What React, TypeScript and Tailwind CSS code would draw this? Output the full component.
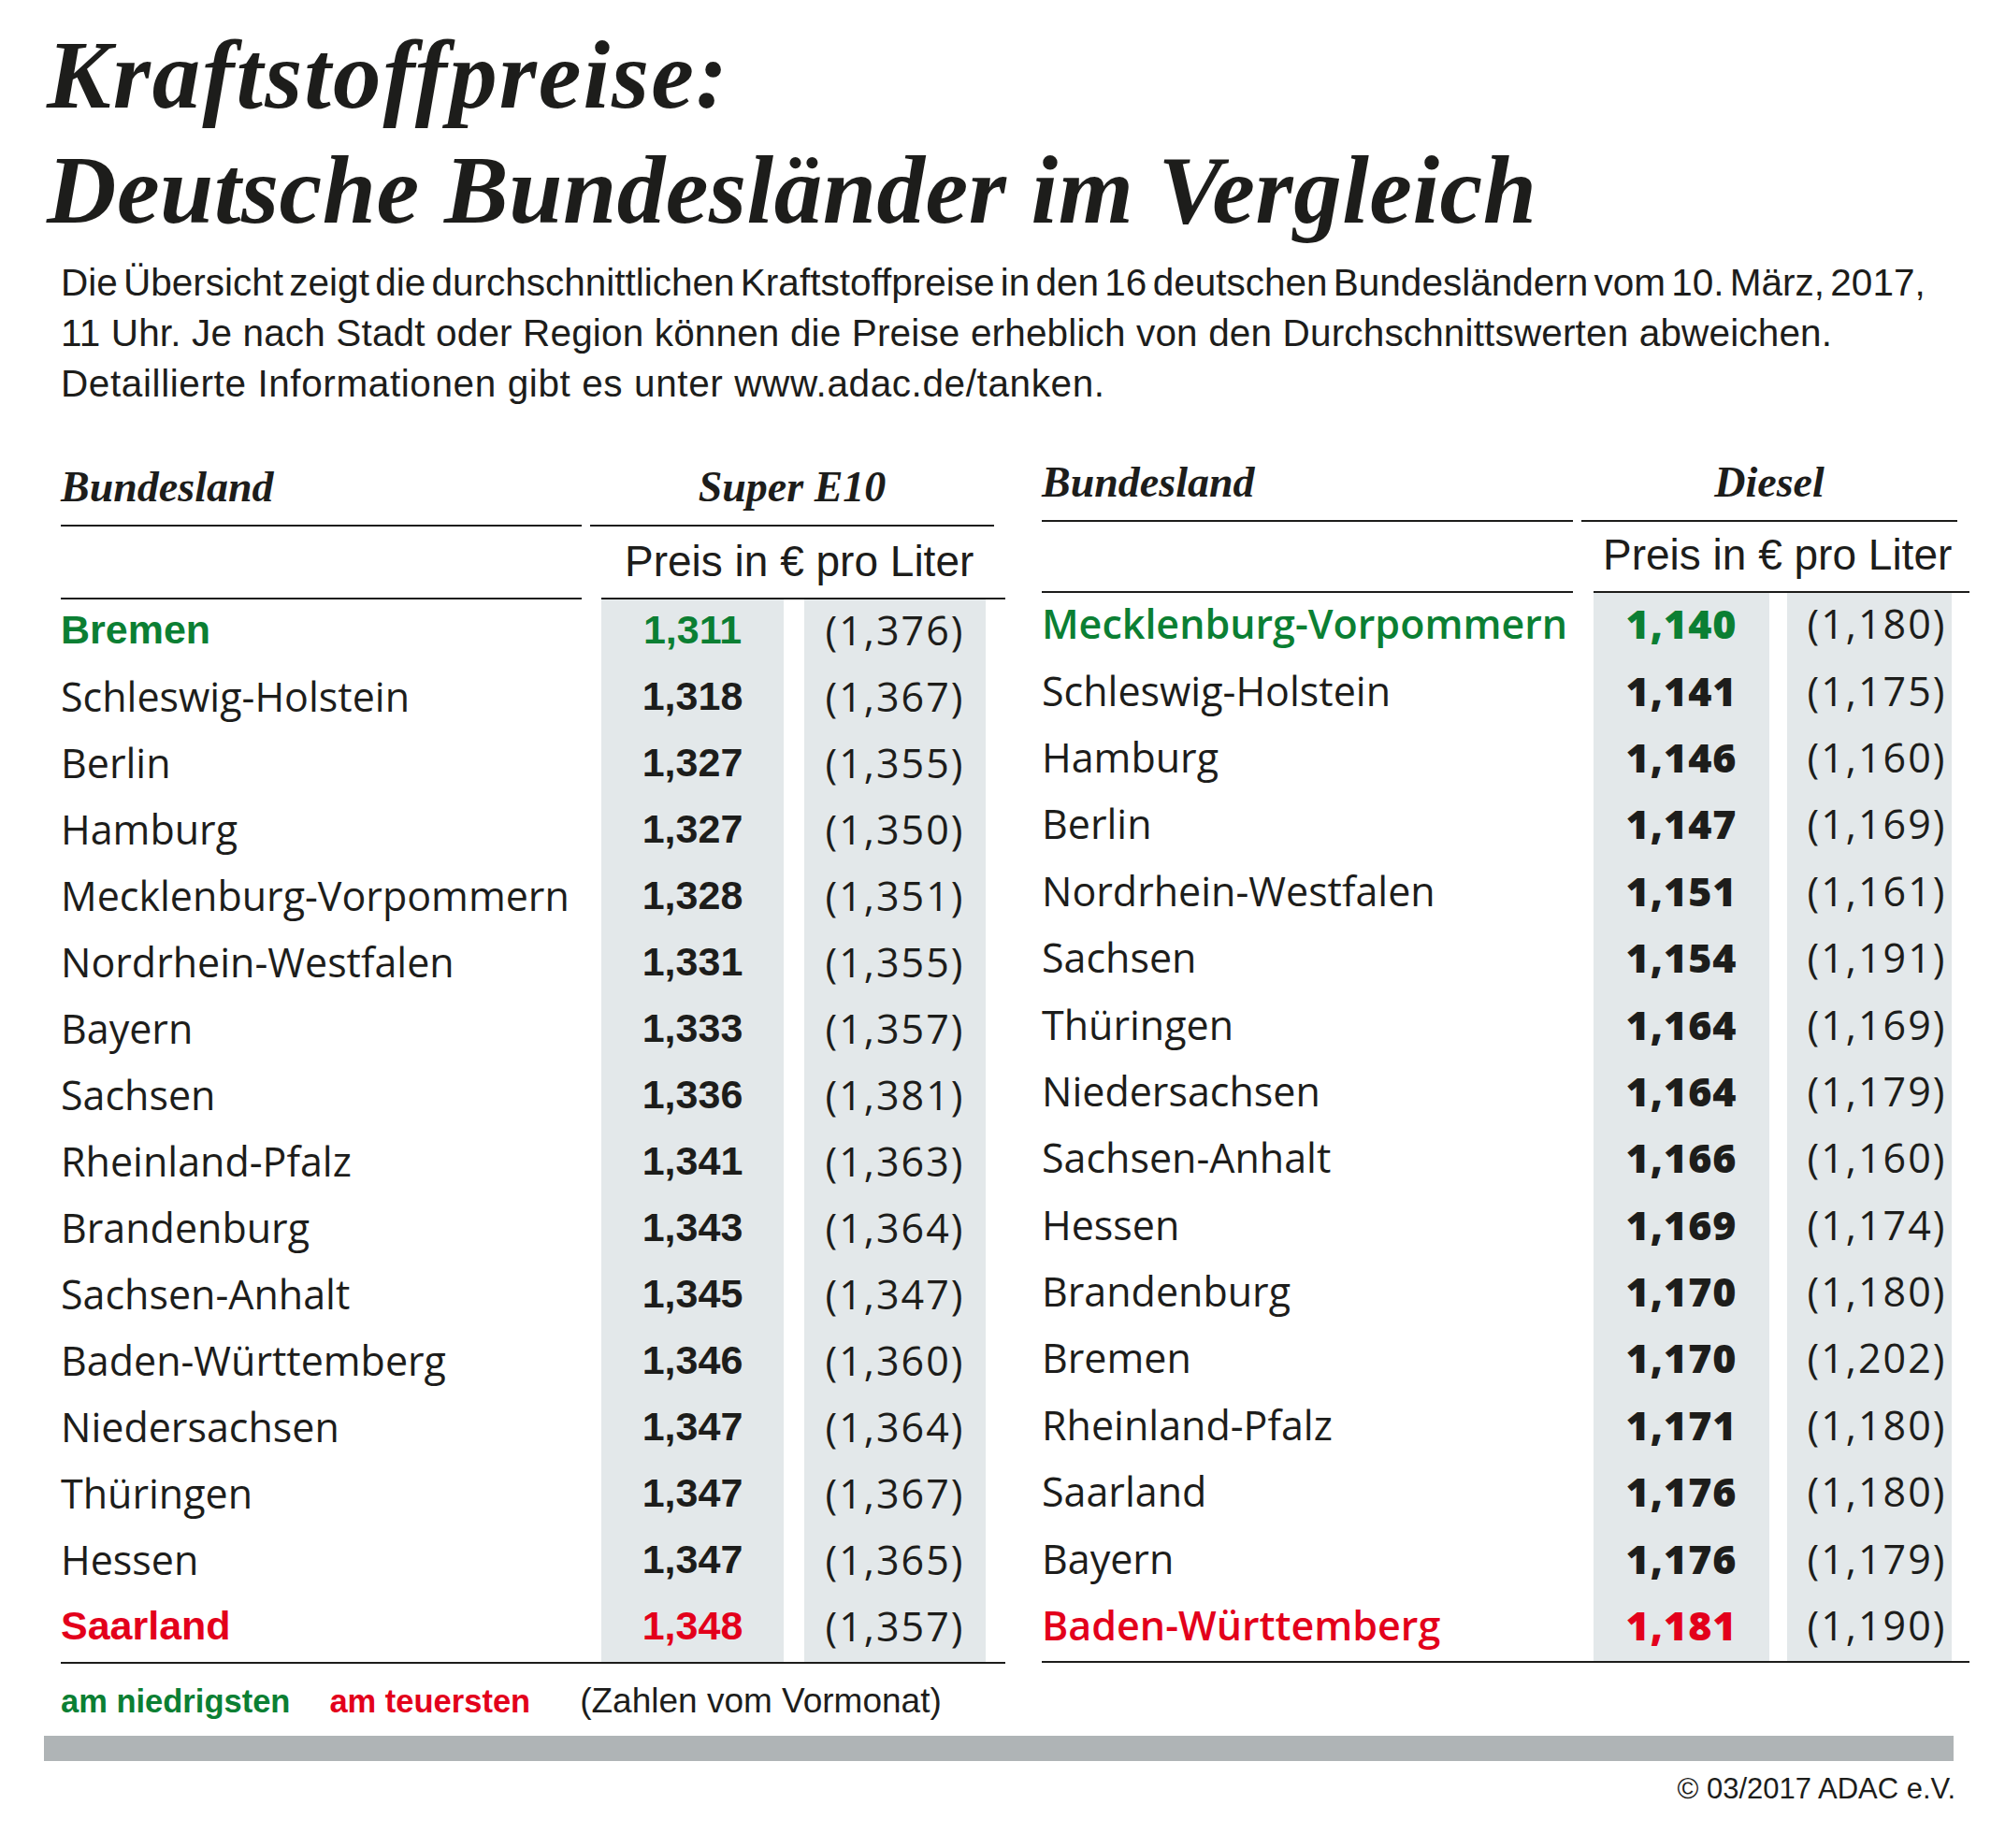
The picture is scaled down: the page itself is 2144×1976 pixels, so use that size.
import React from "react";

const SANS = "font-['Liberation_Sans',Arial,sans-serif]";
const OPEN = "font-['Open_Sans',sans-serif]";
const SERIF = "font-['Liberation_Serif','Times_New_Roman',serif]";

type Row = [string, string, string];

const e10: Row[] = [
  ["Bremen", "1,311", "(1,376)"],
  ["Schleswig-Holstein", "1,318", "(1,367)"],
  ["Berlin", "1,327", "(1,355)"],
  ["Hamburg", "1,327", "(1,350)"],
  ["Mecklenburg-Vorpommern", "1,328", "(1,351)"],
  ["Nordrhein-Westfalen", "1,331", "(1,355)"],
  ["Bayern", "1,333", "(1,357)"],
  ["Sachsen", "1,336", "(1,381)"],
  ["Rheinland-Pfalz", "1,341", "(1,363)"],
  ["Brandenburg", "1,343", "(1,364)"],
  ["Sachsen-Anhalt", "1,345", "(1,347)"],
  ["Baden-Württemberg", "1,346", "(1,360)"],
  ["Niedersachsen", "1,347", "(1,364)"],
  ["Thüringen", "1,347", "(1,367)"],
  ["Hessen", "1,347", "(1,365)"],
  ["Saarland", "1,348", "(1,357)"],
];

const diesel: Row[] = [
  ["Mecklenburg-Vorpommern", "1,140", "(1,180)"],
  ["Schleswig-Holstein", "1,141", "(1,175)"],
  ["Hamburg", "1,146", "(1,160)"],
  ["Berlin", "1,147", "(1,169)"],
  ["Nordrhein-Westfalen", "1,151", "(1,161)"],
  ["Sachsen", "1,154", "(1,191)"],
  ["Thüringen", "1,164", "(1,169)"],
  ["Niedersachsen", "1,164", "(1,179)"],
  ["Sachsen-Anhalt", "1,166", "(1,160)"],
  ["Hessen", "1,169", "(1,174)"],
  ["Brandenburg", "1,170", "(1,180)"],
  ["Bremen", "1,170", "(1,202)"],
  ["Rheinland-Pfalz", "1,171", "(1,180)"],
  ["Saarland", "1,176", "(1,180)"],
  ["Bayern", "1,176", "(1,179)"],
  ["Baden-Württemberg", "1,181", "(1,190)"],
];

type TableProps = {
  title: string;
  rows: Row[];
  headerH: string;
  subH: string;
  nameW: string;
  priceW: string;
  subMl: string;
  subPl: string;
  rowH: string;
  col1: string;
  col2: string;
  numCls: string;
  hlCls: string;
};

function PriceTable(p: TableProps) {
  const last = p.rows.length - 1;
  return (
    <div className="flex flex-col">
      <div className={`flex ${p.headerH}`}>
        <div className={`${p.nameW} border-b-2 border-[#1d1d1b] flex items-end pb-[17px]`}>
          <span className={`${SERIF} font-bold italic text-[46px] leading-none`}>Bundesland</span>
        </div>
        <div className={`ml-[9px] ${p.priceW} border-b-2 border-[#1d1d1b] flex items-end justify-center pb-[17px]`}>
          <span className={`${SERIF} font-bold italic text-[46px] leading-none`}>{p.title}</span>
        </div>
      </div>
      <div className={`flex ${p.subH}`}>
        <div className={`${p.nameW} border-b-2 border-[#1d1d1b]`} />
        <div className={`${p.subMl} ${p.priceW} border-b-2 border-[#1d1d1b] flex items-end ${p.subPl} pb-[16px]`}>
          <span className={`${SANS} text-[46px] leading-none whitespace-nowrap`}>Preis in € pro Liter</span>
        </div>
      </div>
      {p.rows.map((r, i) => {
        const color = i === 0 ? "text-[#0b7f33]" : i === last ? "text-[#e3001b]" : "text-[#1d1d1b]";
        const nameCls = i === 0 || i === last ? p.hlCls : `${OPEN} font-normal`;
        return (
          <div key={i} className={`flex ${p.rowH}`}>
            <div className={`${p.nameW} flex items-center pb-[6px] whitespace-nowrap text-[43px] leading-none ${nameCls} ${color}`}>
              {r[0]}
            </div>
            <div className={`${p.col1} bg-[#e3e8ea] flex items-center justify-center pb-[6px]`}>
              <span className={`${p.numCls} text-[43px] leading-none ${color}`}>{r[1]}</span>
            </div>
            <div className={`${p.col2} bg-[#e3e8ea] flex items-center justify-center pb-[6px]`}>
              <span className={`${OPEN} text-[43px] leading-none tracking-[2px] text-[#1d1d1b]`}>{r[2]}</span>
            </div>
          </div>
        );
      })}
      <div className="border-t-2 border-[#1d1d1b]" />
    </div>
  );
}

export default function App() {
  return (
    <div className="w-[2144px] h-[1976px] bg-white text-[#1d1d1b] overflow-hidden">
      <div className="pt-[19px] pl-[50px]">
        <h1 className={`${SERIF} font-bold italic text-[103px] leading-[123px] whitespace-nowrap`}>
          <span className="tracking-[2px]">Kraftstoffpreise:</span>
          <br />
          <span className="tracking-[0.5px]">Deutsche Bundesländer im Vergleich</span>
        </h1>
      </div>
      <p className={`${SANS} mt-[10px] ml-[65px] text-[40.5px] leading-[54px] whitespace-nowrap`}>
        <span className="[word-spacing:-5px]">
          Die Übersicht zeigt die durchschnittlichen Kraftstoffpreise in den 16 deutschen Bundesländern vom 10. März, 2017,
        </span>
        <br />
        <span className="tracking-[0.15px]">
          11 Uhr. Je nach Stadt oder Region können die Preise erheblich von den Durchschnittswerten abweichen.
        </span>
        <br />
        <span className="tracking-[0.6px]">Detaillierte Informationen gibt es unter www.adac.de/tanken.</span>
      </p>
      <div className="mt-[33px] flex items-start">
        <div className="ml-[65px] w-[1010px] flex flex-col">
          <PriceTable
            title="Super E10"
            rows={e10}
            headerH="h-[93px]"
            subH="h-[78px]"
            nameW="w-[557px]"
            priceW="w-[432px]"
            subMl="ml-[21px]"
            subPl="pl-[25px]"
            rowH="h-[71px]"
            col1="ml-[21px] w-[195px]"
            col2="ml-[22px] w-[194px]"
            numCls={`${SANS} font-bold`}
            hlCls={`${SANS} font-bold`}
          />
          <div className={`${SANS} mt-[22px] flex items-baseline h-[36px] leading-[36px] whitespace-nowrap`}>
            <span className="font-bold text-[34.5px] text-[#0b7f33]">am niedrigsten</span>
            <span className="ml-[42px] font-bold text-[34.5px] text-[#e3001b]">am teuersten</span>
            <span className="ml-[53px] text-[37px]">(Zahlen vom Vormonat)</span>
          </div>
        </div>
        <div className="ml-[39px] w-[992px] flex flex-col">
          <PriceTable
            title="Diesel"
            rows={diesel}
            headerH="h-[88px]"
            subH="h-[76px]"
            nameW="w-[568px]"
            priceW="w-[402px]"
            subMl="ml-[22px]"
            subPl="pl-[10px]"
            rowH="h-[71.4px]"
            col1="ml-[22px] w-[188px]"
            col2="ml-[19px] w-[176px] pl-[16px]"
            numCls={`${OPEN} font-extrabold tracking-[1px]`}
            hlCls={`${OPEN} font-semibold`}
          />
        </div>
      </div>
      <div className="mt-[19px] ml-[47px] w-[2042px] h-[27px] bg-[#afb4b6]" />
      <div className={`${SANS} mt-[14px] pr-[53px] text-right text-[31px] leading-none`}>© 03/2017 ADAC e.V.</div>
    </div>
  );
}
